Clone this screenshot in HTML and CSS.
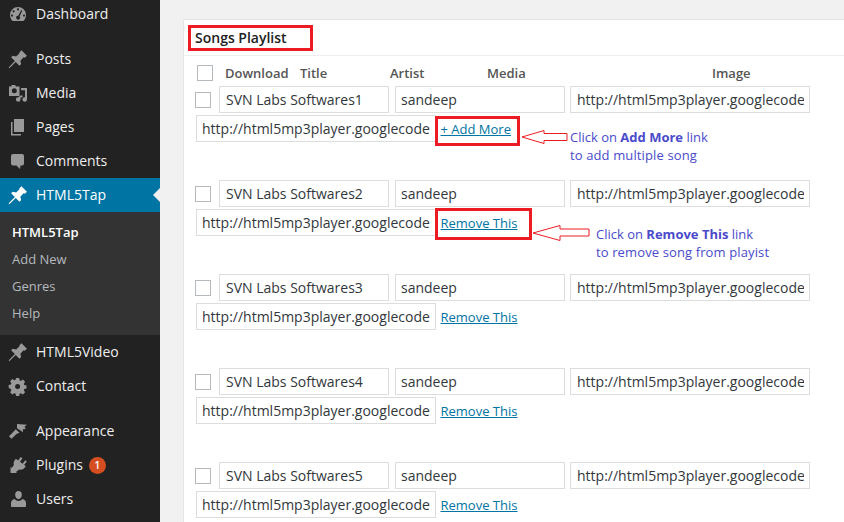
FILE: index.html
```html
<!DOCTYPE html>
<html lang="en">
<head>
<meta charset="utf-8">
<title>Songs Playlist</title>
<link rel="stylesheet" href="styles.css">
</head>
<body>
<div class="page">
  <nav class="sidebar">
    <a class="item"><svg class="ico" viewBox="0 0 20 20"><path fill-rule="evenodd" d="M10 3a8 8 0 0 0-8 8c0 2 .7 3.800 2 5.500.3.300.6.500 1 .5h10c.4 0 .7-.2 1-.5 1.300-1.700 2-3.500 2-5.500a8 8 0 0 0-8-8zM10 4.300a1.100 1.100 0 1 1 0 2.200 1.100 1.100 0 0 1 0-2.200zM5.600 6.200a1.100 1.100 0 1 1 0 2.200 1.100 1.100 0 0 1 0-2.200zM13.300 6l1 .5-2.700 6a1.900 1.900 0 1 1-1.400-.7zM4 10.500a1.100 1.100 0 1 1 0 2.200 1.100 1.100 0 0 1 0-2.200zM16 10.500a1.100 1.100 0 1 1 0 2.200 1.100 1.100 0 0 1 0-2.200z"/></svg>Dashboard</a>
    <a class="item sep"><svg class="ico" viewBox="0 0 20 20"><path transform="scale(1.1)" d="M10.440 3.020l1.820-1.820 4.940 4.940-1.820 1.820-1.140-.38-3.040 3.040.76 3.040-1.520 1.520-3.420-3.420-5.320 5.320-1.140.38.380-1.140 5.320-5.320-3.420-3.420 1.520-1.520 3.040.76 3.040-3.040z"/></svg>Posts</a>
    <a class="item"><svg class="ico" viewBox="0 0 20 20"><path fill-rule="evenodd" d="M3.500 2h3.500l1 1.500h3.500V13H1V3.500h2.500zM6.300 5.300a2.500 2.500 0 1 0 0 5 2.500 2.500 0 0 0 0-5z"/><path d="M13 5h6v11.500a2.300 2.300 0 1 1-2-2.300V7.300h-4zM12.500 12.500h2v1.700l-2 .4v1.900a2.300 2.300 0 1 1-2-2.300z"/></svg>Media</a>
    <a class="item"><svg class="ico" viewBox="0 0 20 20"><path d="M6 2h10v13H6zM4.500 5v12H13v1.500H3V5z"/></svg>Pages</a>
    <a class="item"><svg class="ico" viewBox="0 0 20 20"><path d="M5 3h9a2 2 0 0 1 2 2v7.500a2 2 0 0 1-2 2h-1.500L12 18l-3.500-3.500H5a2 2 0 0 1-2-2V5a2 2 0 0 1 2-2z"/></svg>Comments</a>
    <a class="item active"><svg class="ico" viewBox="0 0 20 20"><path transform="scale(1.1)" d="M10.440 3.020l1.820-1.820 4.940 4.940-1.820 1.820-1.140-.38-3.040 3.040.76 3.040-1.520 1.520-3.420-3.420-5.320 5.320-1.140.38.380-1.140 5.320-5.320-3.420-3.420 1.520-1.520 3.040.76 3.040-3.040z"/></svg>HTML5Tap</a>
    <div class="submenu">
      <a class="sub current">HTML5Tap</a>
      <a class="sub">Add New</a>
      <a class="sub">Genres</a>
      <a class="sub">Help</a>
    </div>
    <a class="item"><svg class="ico" viewBox="0 0 20 20"><path transform="scale(1.1)" d="M10.440 3.020l1.820-1.820 4.940 4.940-1.820 1.820-1.140-.38-3.040 3.040.76 3.040-1.520 1.520-3.420-3.420-5.320 5.320-1.140.38.380-1.140 5.320-5.320-3.420-3.420 1.520-1.520 3.040.76 3.040-3.040z"/></svg>HTML5Video</a>
    <a class="item"><svg class="ico" viewBox="0 0 20 20"><path fill-rule="evenodd" d="M8 2h3.200l.4 2.300 1.300.6 2-1.300 2.200 2.200-1.300 2 .5 1.300 2.200.4v3.100l-2.200.4-.5 1.300 1.300 2-2.200 2.200-2-1.300-1.300.5-.4 2.300H8l-.4-2.300-1.300-.5-2 1.300-2.200-2.200 1.300-2-.5-1.300L.7 12v-3.100l2.200-.4.500-1.300-1.300-2 2.200-2.200 2 1.300 1.300-.6zM9.600 8a2.500 2.500 0 1 0 0 5 2.500 2.500 0 0 0 0-5z"/></svg>Contact</a>
    <a class="item sep"><svg class="ico" viewBox="0 0 20 20"><path d="M9 3l10 .8-2.500 2 1.300 2.200-3 .2.300 3L9 7.300zM7.700 8.200l3.800 3.600-3 1.300-5 4.700-2.500-2.500 4.700-4.800z"/></svg>Appearance</a>
    <a class="item"><svg class="ico" viewBox="0 0 20 20"><path d="M12.700 2l1.800 1.200-2.500 3.600 2.600 1.900 2.600-3.500 1.600 1.200-2.700 3.600 1.700 1.300-1 1.300c-1.500 2-3.700 2.700-5.700 1.900L8 17l1 1H2.500v-6l1.200 1 2.200-2.900c-.6-1.700-.2-3.500 1-5l1-1.300 2.200 1.600z"/></svg>Plugins<span class="badge">1</span></a>
    <a class="item"><svg class="ico" viewBox="0 0 20 20"><path d="M10.500 2a3.300 3.300 0 0 1 3.300 3.700c0 2.300-1.300 4.300-3.300 4.300S7.200 8 7.200 5.700A3.300 3.300 0 0 1 10.500 2zM6.500 10c1 1.200 2.500 2 4 2s3-.8 4-2c2 .6 3.500 2 3.500 4v3c0 .6-.4 1-1 1H4c-.6 0-1-.4-1-1v-3c0-2 1.500-3.400 3.500-4z"/></svg>Users</a>
  </nav>
  <main class="main">
    <section class="panel">
      <h2 class="panel-title">Songs Playlist</h2>
      <div class="list">
        <div class="head">
          <input class="check" type="checkbox">
          <span class="col-download">Download</span>
          <span class="col-title">Title</span>
          <span class="col-artist">Artist</span>
          <span class="col-media">Media</span>
          <span>Image</span>
        </div>
        <div class="song">
          <div class="line"><input class="check" type="checkbox"><input class="field short" value="SVN Labs Softwares1"><input class="field short" value="sandeep"><input class="field long" value="http://html5mp3player.googlecode.com/files/song.mp3"></div>
          <div class="line second"><input class="field long" value="http://html5mp3player.googlecode.com/files/song.mp3"><a class="link">+ Add More</a></div>
        </div>
        <div class="song">
          <div class="line"><input class="check" type="checkbox"><input class="field short" value="SVN Labs Softwares2"><input class="field short" value="sandeep"><input class="field long" value="http://html5mp3player.googlecode.com/files/song.mp3"></div>
          <div class="line second"><input class="field long" value="http://html5mp3player.googlecode.com/files/song.mp3"><a class="link">Remove This</a></div>
        </div>
        <div class="song">
          <div class="line"><input class="check" type="checkbox"><input class="field short" value="SVN Labs Softwares3"><input class="field short" value="sandeep"><input class="field long" value="http://html5mp3player.googlecode.com/files/song.mp3"></div>
          <div class="line second"><input class="field long" value="http://html5mp3player.googlecode.com/files/song.mp3"><a class="link">Remove This</a></div>
        </div>
        <div class="song">
          <div class="line"><input class="check" type="checkbox"><input class="field short" value="SVN Labs Softwares4"><input class="field short" value="sandeep"><input class="field long" value="http://html5mp3player.googlecode.com/files/song.mp3"></div>
          <div class="line second"><input class="field long" value="http://html5mp3player.googlecode.com/files/song.mp3"><a class="link">Remove This</a></div>
        </div>
        <div class="song">
          <div class="line"><input class="check" type="checkbox"><input class="field short" value="SVN Labs Softwares5"><input class="field short" value="sandeep"><input class="field long" value="http://html5mp3player.googlecode.com/files/song.mp3"></div>
          <div class="line second"><input class="field long" value="http://html5mp3player.googlecode.com/files/song.mp3"><a class="link">Remove This</a></div>
        </div>
      </div>
    </section>
    <div class="mark mark-title"></div>
    <div class="mark mark-add"></div>
    <div class="mark mark-remove"></div>
    <svg class="arrow arrow-add" viewBox="0 0 47 14"><path d="M1 7 L23 .5 V3.500 H46 V10.500 H23 V13.500 Z"/></svg>
    <svg class="arrow arrow-remove" viewBox="0 0 58 16"><path d="M1 8 L28 .5 V4 H57 V11 H28 V15.500 Z"/></svg>
    <p class="note note-add">Click on <b>Add More</b> link<br><span class="wide">to add multiple song</span></p>
    <p class="note note-remove">Click on <b>Remove This</b> link<br><span class="wide">to remove song from playist</span></p>
  </main>
</div>
</body>
</html>
```
FILE: styles.css
```css
* { box-sizing: border-box; }
html, body { margin: 0; padding: 0; height: 100%; overflow: hidden; }
body { background: #f1f1f1; font-family: "Open Sans", sans-serif; font-size: 14px; color: #444; }
.page { display: flex; width: 844px; height: 522px; overflow: hidden; }

.sidebar { width: 160px; flex: none; height: 522px; background: #222; display: flex; flex-direction: column; }
.item { display: flex; align-items: center; height: 34px; flex: none; color: #eee; font-size: 14px; padding: 0 0 2px 36px; position: relative; }
.item:first-child { margin-top: -3px; }
.item.sep { margin-top: 11px; }
.ico { position: absolute; left: 8px; top: 7px; width: 20px; height: 20px; fill: #999; }
.active { background: #0074a2; color: #fff; }
.active .ico { fill: #fff; }
.active::after { content: ""; position: absolute; right: 0; top: 10px; border: 7px solid transparent; border-right-color: #f1f1f1; border-left: 0; }
.submenu { background: #333; height: 123px; flex: none; padding: 7px 0 8px; display: flex; flex-direction: column; }
.sub { height: 27px; line-height: 27px; font-size: 13px; padding-left: 12px; color: #b4b9be; }
.sub.current { color: #fff; font-weight: 600; }
.badge { width: 17px; height: 17px; border-radius: 50%; background: #d54e21; color: #fff; font-size: 10px; font-weight: 600; margin: 2px 0 0 6px; display: flex; align-items: center; justify-content: center; }

.main { position: relative; flex: 1; padding: 19px 0 0 23px; min-width: 0; }
.panel { width: 680px; height: 520px; background: #fff; border: 1px solid #e5e5e5; border-right: 0; }
.panel-title { margin: 0; height: 36px; border-bottom: 1px solid #eee; font-size: 14px; font-weight: 600; color: #222; line-height: 36px; padding-left: 11px; }
.list { padding-left: 11px; }
.head { display: flex; align-items: center; height: 30px; font-size: 13px; font-weight: 600; color: #555; padding-top: 3px; }
.head .check { margin: 0 0 0 2px; }
.col-download { margin-left: 12px; width: 75px; }
.col-title { width: 90px; }
.col-artist { width: 97px; }
.col-media { width: 225px; }
.check { appearance: none; width: 16px; height: 16px; border: 1px solid #b4b9be; background: #fff; margin: 0; flex: none; }
.song { height: 94px; }
.line { display: flex; align-items: center; }
.line .check { margin-right: 8px; }
.second { margin-top: 2px; padding-left: 1px; }
.field { height: 27px; border: 1px solid #ddd; background: #fff; font-family: "Open Sans", sans-serif; font-size: 14px; color: #32373c; padding: 0 5px; margin: 0; flex: none; outline: 0; }
.check + .field { padding-left: 6px; }
.line:first-child .long { padding-left: 6px; }
.short { width: 170px; margin-right: 6px; }
.short + .short { margin-right: 5px; }
.long { width: 240px; }
.link { color: #0074a2; text-decoration: underline; font-size: 13px; margin-left: 4.500px; }

.mark { position: absolute; border: 3px solid #ed1c24; }
.mark-title { left: 28px; top: 25px; width: 125px; height: 26px; }
.mark-add { left: 275px; top: 116px; width: 85px; height: 30px; }
.mark-remove { left: 275px; top: 208px; width: 97px; height: 32px; }
.arrow { position: absolute; fill: #fff; stroke: #ed1c24; stroke-width: 1; }
.arrow-add { left: 361px; top: 130px; width: 47px; height: 14px; }
.arrow-remove { left: 372px; top: 225px; width: 58px; height: 16px; }
.note { position: absolute; margin: 0; font-size: 13px; line-height: 18px; color: #4a4acb; white-space: nowrap; }
.note-add { left: 410px; top: 128px; }
.note-remove { left: 436px; top: 225px; }
.wide { letter-spacing: .12px; }
```
